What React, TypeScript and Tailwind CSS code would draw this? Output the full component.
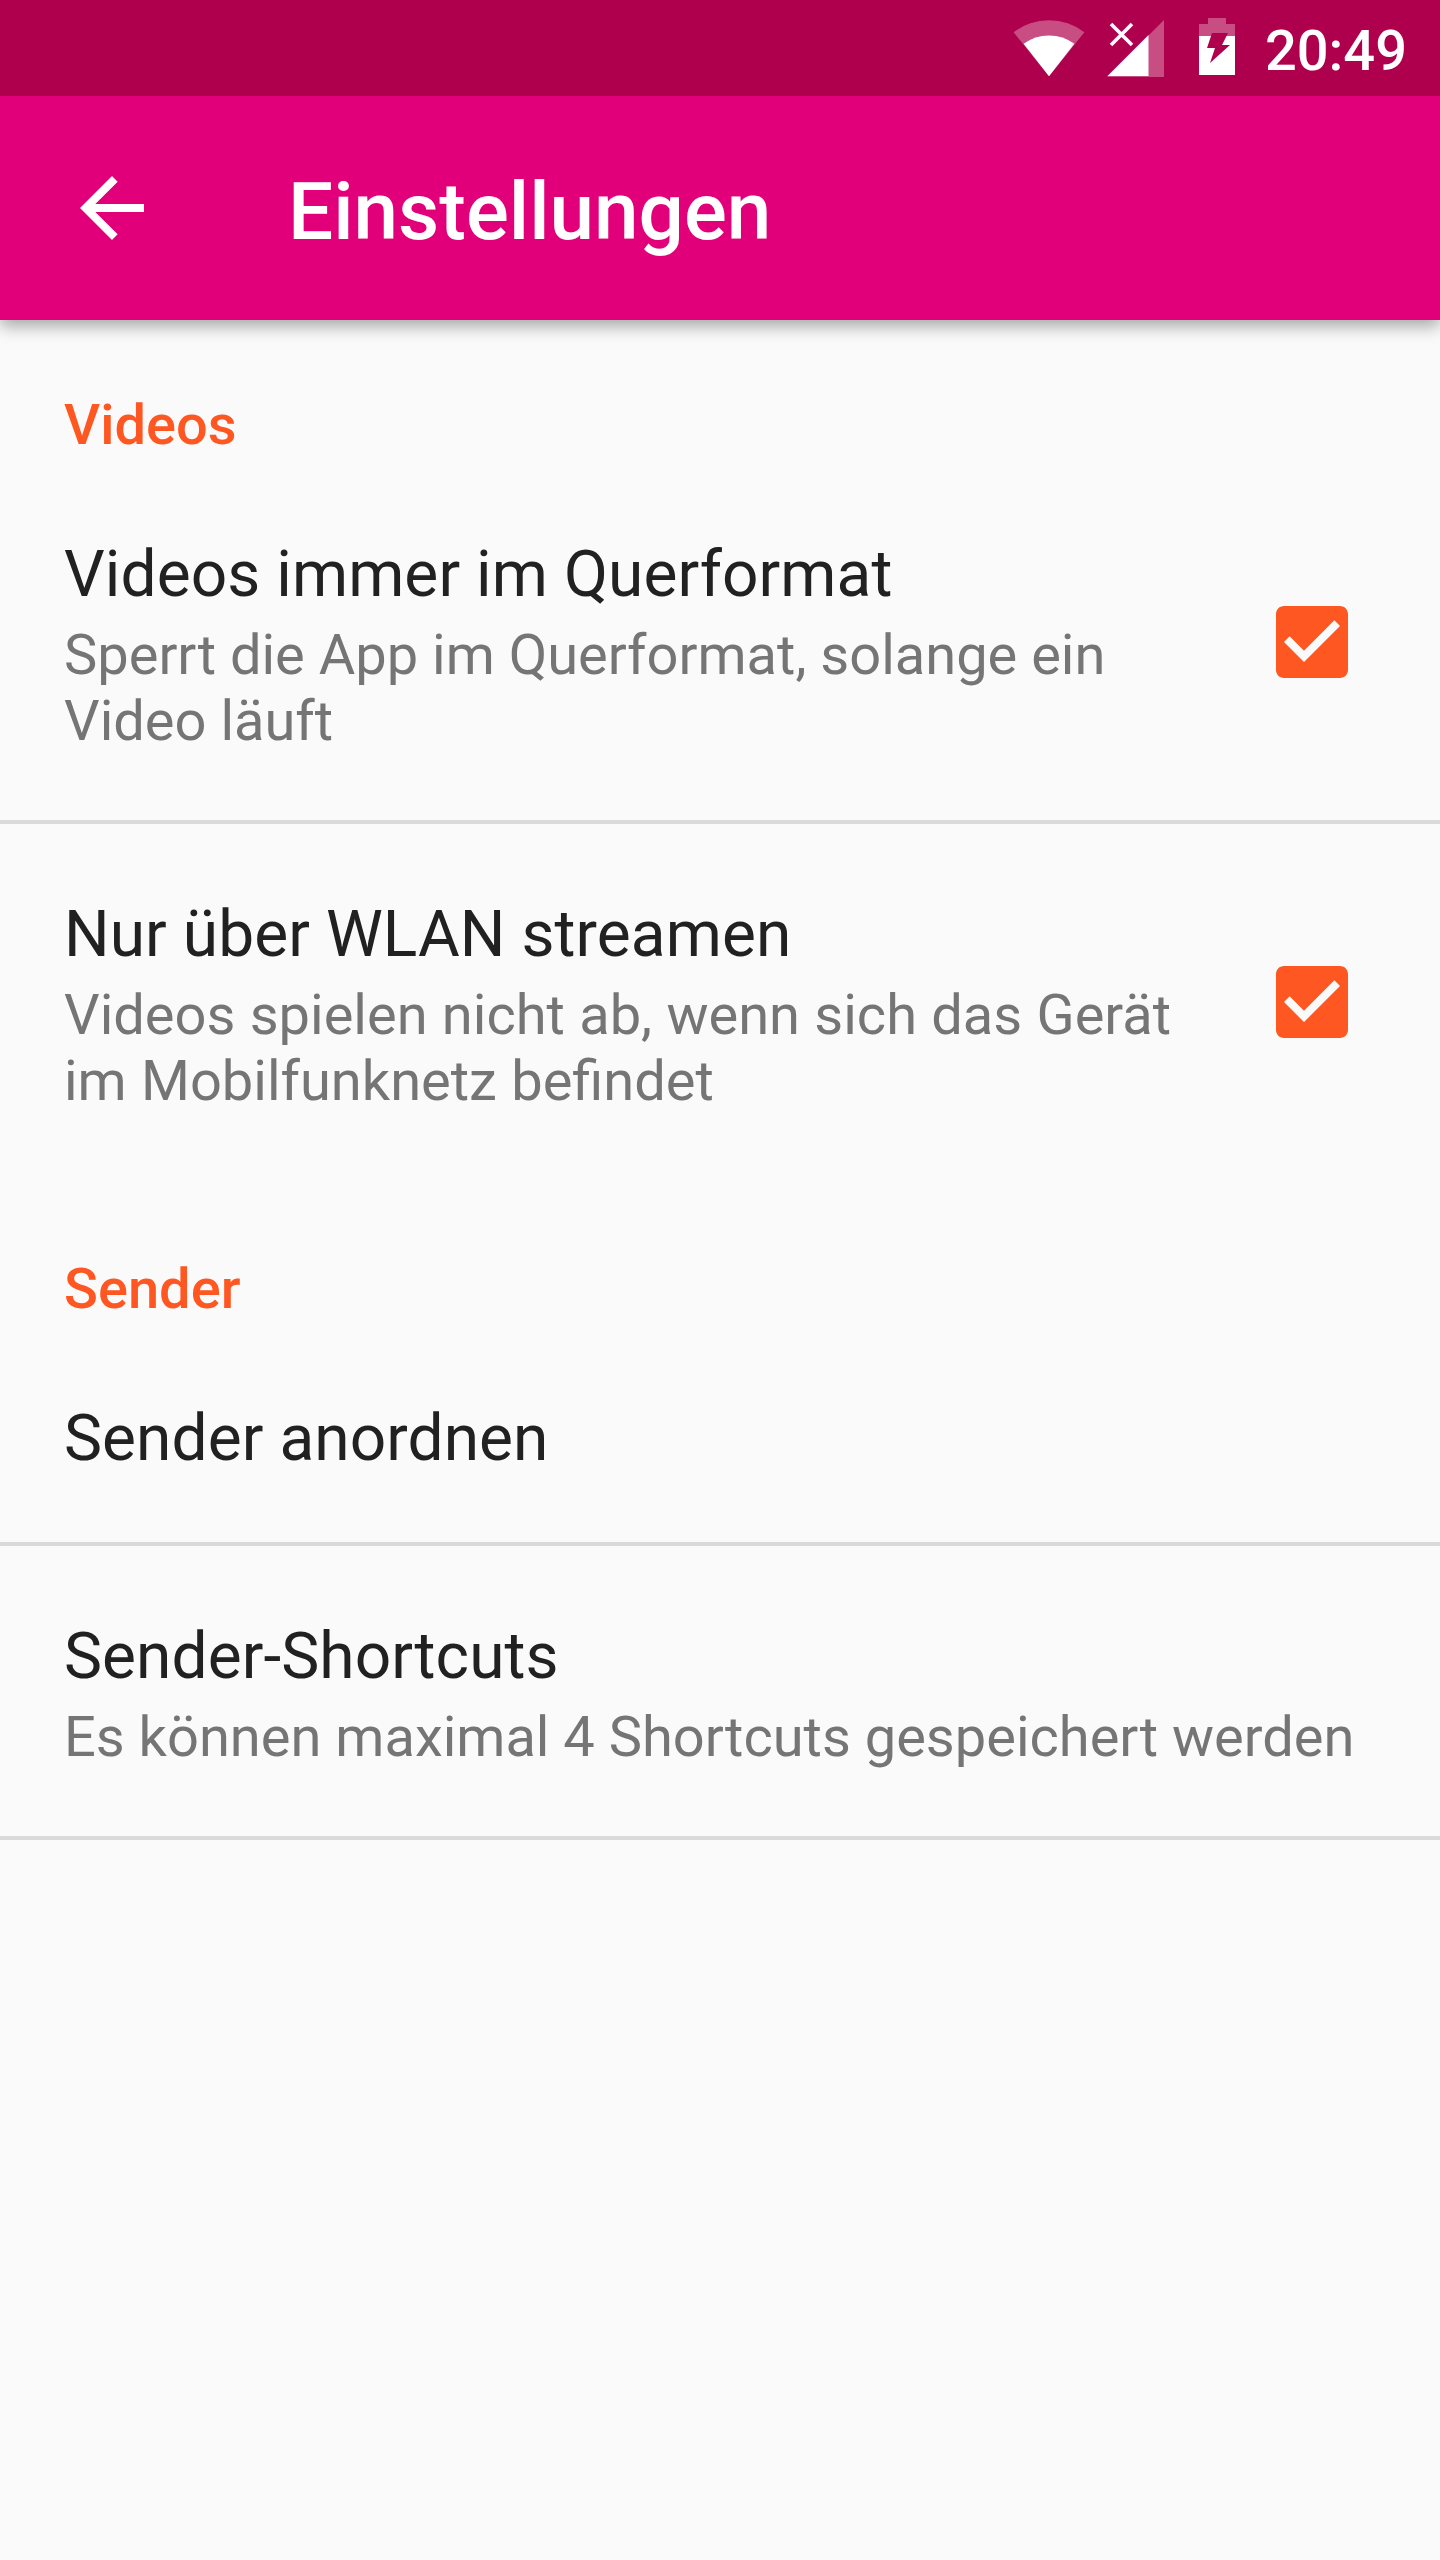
function Check() {
  return (
    <svg className="size-[96px] shrink-0" viewBox="0 0 24 24" aria-hidden="true">
      <path fill="#ff5722" d="M19 3H5c-1.11 0-2 .9-2 2v14c0 1.1.89 2 2 2h14c1.11 0 2-.9 2-2V5c0-1.1-.89-2-2-2zm-9 14l-5-5 1.41-1.41L10 14.17l7.59-7.59L19 8l-9 9z" />
    </svg>
  );
}

function WifiIcon() {
  return (
    <svg className="h-[58px] w-[72px]" viewBox="0 0 72 58" fill="#fff" aria-hidden="true">
      <path fillOpacity=".3" d="M36 56.3.6 12.3A58 58 0 0 1 71.4 12.3Z" />
      <path d="M36 56.3 10.6 23.8A43 43 0 0 1 61.4 23.8Z" />
    </svg>
  );
}

function SignalIcon() {
  return (
    <svg className="h-[58px] w-[58px]" viewBox="0 0 58 58" fill="#fff" aria-hidden="true">
      <path fillOpacity=".3" d="M0 57 57 0V57Z" />
      <path d="M.5 56 41.5 15V56Z" />
      <path d="M4 4 25 25M25 4 4 25" stroke="#fff" strokeWidth="3.6" />
    </svg>
  );
}

function BatteryIcon() {
  return (
    <svg className="h-[57px] w-[36px]" viewBox="0 0 36 57" fill="#fff" aria-hidden="true">
      <path fillOpacity=".3" d="M9 0H27V6H36V18H0V6H9Z" />
      <path d="M0 18H36V57H0Z" />
      <path fill="#af004e" d="M13 15H29L23 27H31L11 45 16 30H8Z" />
    </svg>
  );
}

function Category({ children }: { children: string }) {
  return <h2 className="px-16 pt-[72px] pb-1.5 text-[56px] leading-[66px] font-medium text-[#ff5722]">{children}</h2>;
}

type RowProps = { title: string; lines?: string[]; checked?: boolean; last?: boolean; spacing?: string };

function Row({ title, lines, checked, last, spacing = "" }: RowProps) {
  return (
    <div className={last ? "border-b-4 border-transparent" : "border-b-4 border-[#dadada]"}>
      <div className="flex items-center justify-between pr-20 pl-16">
        <div className="pt-[73px] pb-[66px] whitespace-nowrap">
          <div className="text-[64px] leading-[75px] tracking-[0.08px] text-[#212121]">{title}</div>
          {lines && (
            <div className={"pt-2.5 text-[56px] leading-[66px] text-[#757575] " + spacing}>
              {lines.map((l) => (
                <div key={l}>{l}</div>
              ))}
            </div>
          )}
        </div>
        {checked && <Check />}
      </div>
    </div>
  );
}

export default function App() {
  return (
    <div className="h-[2560px] w-[1440px] overflow-hidden bg-[#fafafa] font-['Roboto',sans-serif]">
      <div className="relative z-10 flex h-24 items-start justify-end bg-[#af004e] pr-[33px] text-[56px] font-medium text-white">
        <div className="pt-5"><WifiIcon /></div>
        <div className="pt-5 pl-[22px]"><SignalIcon /></div>
        <div className="pt-[18px] pr-[30px] pl-[34px]"><BatteryIcon /></div>
        <span className="pt-[18px] leading-[66px]">20:49</span>
      </div>
      <header className="relative flex h-56 items-center bg-[#e2007a] text-white shadow-[0_6px_16px_rgba(0,0,0,0.35)]">
        <svg className="ml-16 size-[96px]" viewBox="0 0 24 24" fill="#fff" aria-hidden="true">
          <path d="M20 11H7.83l5.59-5.59L12 4l-8 8 8 8 1.41-1.41L7.83 13H20v-2z" />
        </svg>
        <h1 className="pt-[7px] pl-32 text-[80px] leading-[94px] font-medium">Einstellungen</h1>
      </header>
      <main>
        <Category>Videos</Category>
        <Row title="Videos immer im Querformat" lines={["Sperrt die App im Querformat, solange ein", "Video läuft"]} checked />
        <Row
          title="Nur über WLAN streamen"
          lines={["Videos spielen nicht ab, wenn sich das Gerät", "im Mobilfunknetz befindet"]}
          spacing="[word-spacing:0.4px]"
          checked
          last
        />
        <Category>Sender</Category>
        <Row title="Sender anordnen" />
        <Row title="Sender-Shortcuts" lines={["Es können maximal 4 Shortcuts gespeichert werden"]} />
      </main>
    </div>
  );
}
